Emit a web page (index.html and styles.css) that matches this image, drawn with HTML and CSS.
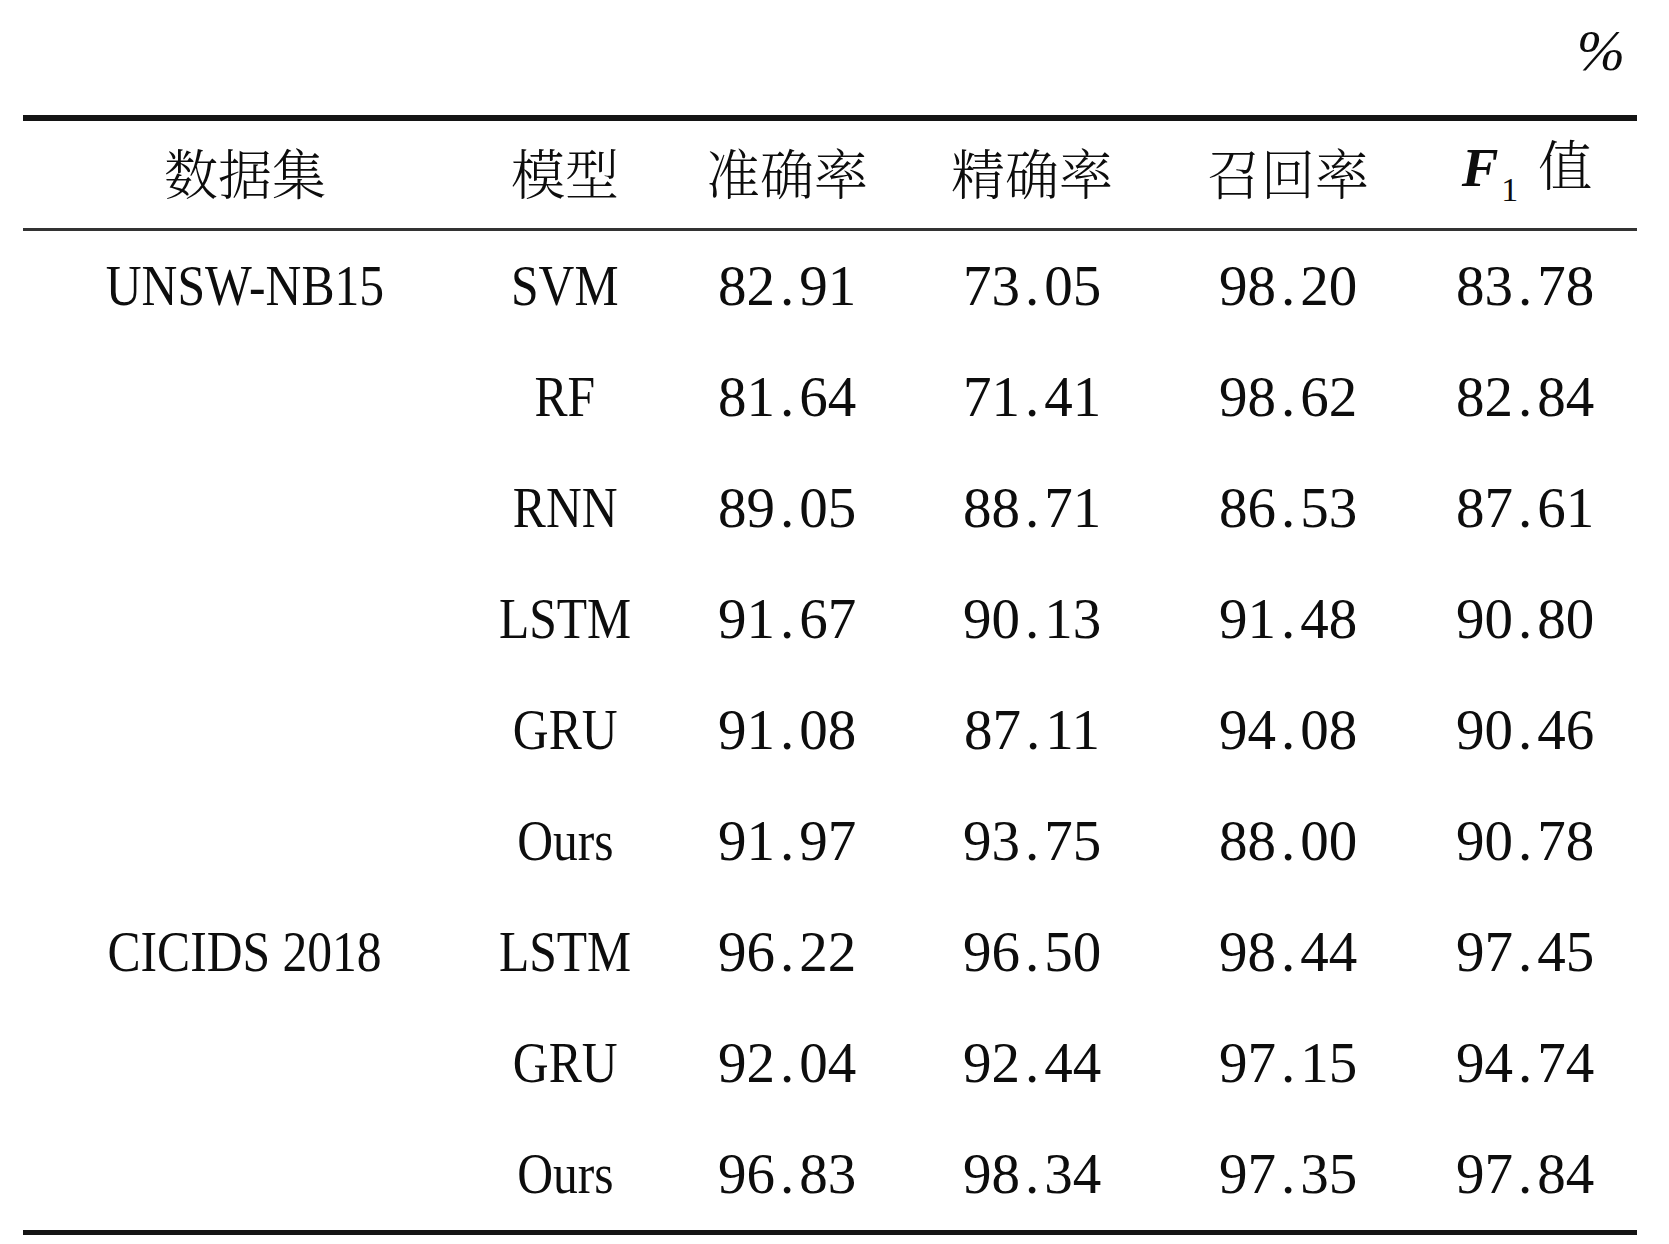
FILE: index.html
```html
<!DOCTYPE html>
<html lang="zh-CN">
<head>
<meta charset="utf-8">
<title>表格</title>
<link rel="stylesheet" href="styles.css">
</head>
<body>
<div class="page">
  <div class="unit"><span>%</span></div>
  <div class="table">
    <div class="row head">
      <div class="cell cjk">数据集</div>
      <div class="cell cjk">模型</div>
      <div class="cell cjk">准确率</div>
      <div class="cell cjk">精确率</div>
      <div class="cell cjk">召回率</div>
      <div class="cell"><span class="fval"><span class="f">F</span><span class="sub">1</span><span class="cjk zhi">值</span></span></div>
    </div>
    <div class="body">
      <div class="row">
        <div class="cell"><span class="name">UNSW-NB15</span></div>
        <div class="cell"><span class="name">SVM</span></div>
        <div class="cell">82<span class="pt">.</span>91</div>
        <div class="cell">73<span class="pt">.</span>05</div>
        <div class="cell">98<span class="pt">.</span>20</div>
        <div class="cell">83<span class="pt">.</span>78</div>
      </div>
      <div class="row">
        <div class="cell"></div>
        <div class="cell"><span class="name">RF</span></div>
        <div class="cell">81<span class="pt">.</span>64</div>
        <div class="cell">71<span class="pt">.</span>41</div>
        <div class="cell">98<span class="pt">.</span>62</div>
        <div class="cell">82<span class="pt">.</span>84</div>
      </div>
      <div class="row">
        <div class="cell"></div>
        <div class="cell"><span class="name">RNN</span></div>
        <div class="cell">89<span class="pt">.</span>05</div>
        <div class="cell">88<span class="pt">.</span>71</div>
        <div class="cell">86<span class="pt">.</span>53</div>
        <div class="cell">87<span class="pt">.</span>61</div>
      </div>
      <div class="row">
        <div class="cell"></div>
        <div class="cell"><span class="name">LSTM</span></div>
        <div class="cell">91<span class="pt">.</span>67</div>
        <div class="cell">90<span class="pt">.</span>13</div>
        <div class="cell">91<span class="pt">.</span>48</div>
        <div class="cell">90<span class="pt">.</span>80</div>
      </div>
      <div class="row">
        <div class="cell"></div>
        <div class="cell"><span class="name">GRU</span></div>
        <div class="cell">91<span class="pt">.</span>08</div>
        <div class="cell">87<span class="pt">.</span>11</div>
        <div class="cell">94<span class="pt">.</span>08</div>
        <div class="cell">90<span class="pt">.</span>46</div>
      </div>
      <div class="row">
        <div class="cell"></div>
        <div class="cell"><span class="name">Ours</span></div>
        <div class="cell">91<span class="pt">.</span>97</div>
        <div class="cell">93<span class="pt">.</span>75</div>
        <div class="cell">88<span class="pt">.</span>00</div>
        <div class="cell">90<span class="pt">.</span>78</div>
      </div>
      <div class="row">
        <div class="cell"><span class="name">CICIDS 2018</span></div>
        <div class="cell"><span class="name">LSTM</span></div>
        <div class="cell">96<span class="pt">.</span>22</div>
        <div class="cell">96<span class="pt">.</span>50</div>
        <div class="cell">98<span class="pt">.</span>44</div>
        <div class="cell">97<span class="pt">.</span>45</div>
      </div>
      <div class="row">
        <div class="cell"></div>
        <div class="cell"><span class="name">GRU</span></div>
        <div class="cell">92<span class="pt">.</span>04</div>
        <div class="cell">92<span class="pt">.</span>44</div>
        <div class="cell">97<span class="pt">.</span>15</div>
        <div class="cell">94<span class="pt">.</span>74</div>
      </div>
      <div class="row">
        <div class="cell"></div>
        <div class="cell"><span class="name">Ours</span></div>
        <div class="cell">96<span class="pt">.</span>83</div>
        <div class="cell">98<span class="pt">.</span>34</div>
        <div class="cell">97<span class="pt">.</span>35</div>
        <div class="cell">97<span class="pt">.</span>84</div>
      </div>
    </div>
  </div>
</div>
</body>
</html>
```

FILE: styles.css
```css
html, body {
  margin: 0;
  padding: 0;
  background: #fff;
}

body {
  font-family: "Liberation Serif", "Noto Serif CJK SC", "Noto Sans CJK SC", serif;
  color: #0d0d0d;
}

.page {
  width: 1614px;
  padding-left: 23px;
}

.unit {
  height: 102px;
  padding-bottom: 13px;
  padding-right: 12px;
  display: flex;
  align-items: center;
  justify-content: flex-end;
  font-size: 58px;
  font-style: italic;
  line-height: 1;
}

.table {
  border-top: 6px solid #141414;
}

.row {
  display: grid;
  grid-template-columns: 444px 196px 248px 242px 270px 204px;
  height: 111px;
}

.head {
  height: 107px;
  border-bottom: 3px solid #333;
}

.head .cell {
  padding-bottom: 6px;
}

.body {
  border-bottom: 5px solid #141414;
}

.body .cell {
  padding-bottom: 3px;
}

.cell {
  display: flex;
  align-items: center;
  justify-content: center;
  font-size: 57px;
  line-height: 1;
  white-space: nowrap;
}

.cjk {
  font-family: "Noto Serif CJK SC", "Noto Sans CJK SC", sans-serif;
  font-size: 54px;
  font-weight: 300;
  line-height: 1;
}

.name {
  display: inline-block;
  transform: scaleX(0.87);
}

.pt {
  margin: 0 5px;
}

.fval {
  line-height: 1;
  margin-left: 4px;
}

.f {
  font-family: "Liberation Serif", serif;
  font-style: italic;
  font-weight: bold;
  font-size: 55px;
}

.sub {
  font-size: 34px;
  vertical-align: -15px;
  line-height: 1;
  margin-left: 3px;
}

.zhi {
  margin-left: 20px;
}
```
